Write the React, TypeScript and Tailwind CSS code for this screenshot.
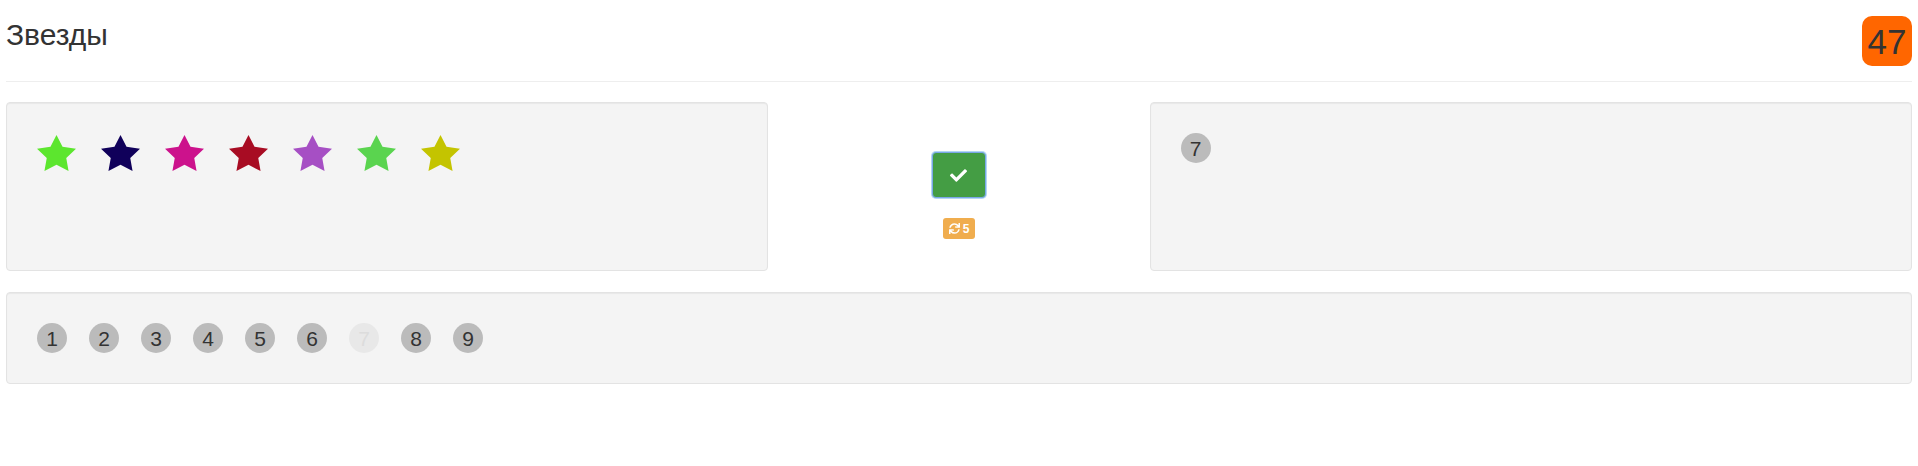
import { FaCheck, FaSync } from "react-icons/fa";

const stars = ["#5ce62e", "#10005a", "#cc128c", "#a80c23", "#a64fc4", "#5ad44f", "#c4c400"];
const numbers = [1, 2, 3, 4, 5, 6, 7, 8, 9];

function Star({ color }: { color: string }) {
  return (
    <svg width="39" height="36" viewBox="2 2 20 19.02" preserveAspectRatio="none">
      <polygon
        fill={color}
        points="12,2 15.09,8.26 22,9.27 17,14.14 18.18,21.02 12,17.77 5.82,21.02 7,14.14 2,9.27 8.91,8.26"
      />
    </svg>
  );
}

function Ball({ n, off }: { n: number; off?: boolean }) {
  return (
    <span
      className={`w-[30px] h-[30px] rounded-full flex items-center justify-center text-[21px] leading-none ${
        off ? "bg-[#e8e8e8] text-[#dcdcdc]" : "bg-[#bbbbbb] text-[#333]"
      }`}
    >
      {n}
    </span>
  );
}

export default function App() {
  return (
    <div className="px-[6px] bg-white min-h-[466px] font-['Liberation_Sans',Arial,sans-serif] text-[#333]">
      {/* Header */}
      <div className="flex items-start justify-between pt-4">
        <h2 className="text-[30px] leading-[33px] mt-[2px]">Звезды</h2>
        <div className="w-[50px] h-[50px] rounded-[10px] bg-[#ff6600] flex items-center justify-center text-[35px] leading-none text-[#333]">
          47
        </div>
      </div>
      <hr className="mt-[15px] mb-5 border-t border-[#eeeeee]" />

      {/* Top row */}
      <div className="grid grid-cols-5">
        <div className="col-span-2 h-[169px] bg-[#f4f4f4] border border-[#e3e3e3] rounded shadow-[inset_0_1px_1px_rgba(0,0,0,0.05)] pl-[30px] pt-[32px]">
          <div className="flex gap-[25px]">
            {stars.map((c, i) => (
              <Star key={i} color={c} />
            ))}
          </div>
        </div>

        <div className="flex flex-col items-center pt-[50px]">
          <button className="w-[54px] h-[46px] rounded bg-[#449d44] border border-[#7aa7e8] shadow-[0_0_0_1px_rgba(102,175,233,0.5)] flex items-center justify-center text-white">
            <FaCheck className="w-[17px] h-[17px]" />
          </button>
          <span className="mt-5 h-[21px] px-[6px] rounded-[3px] bg-[#f0ad4e] text-white text-[12px] font-bold flex items-center gap-[3px]">
            <FaSync className="w-[11px] h-[11px]" />5
          </span>
        </div>

        <div className="col-span-2 h-[169px] bg-[#f4f4f4] border border-[#e3e3e3] rounded shadow-[inset_0_1px_1px_rgba(0,0,0,0.05)] pl-[30px] pt-[30px]">
          <Ball n={7} />
        </div>
      </div>

      {/* Bottom row */}
      <div className="mt-[21px] h-[92px] bg-[#f4f4f4] border border-[#e3e3e3] rounded shadow-[inset_0_1px_1px_rgba(0,0,0,0.05)] px-[30px] flex items-center gap-[22px]">
        {numbers.map((n) => (
          <Ball key={n} n={n} off={n === 7} />
        ))}
      </div>
    </div>
  );
}
